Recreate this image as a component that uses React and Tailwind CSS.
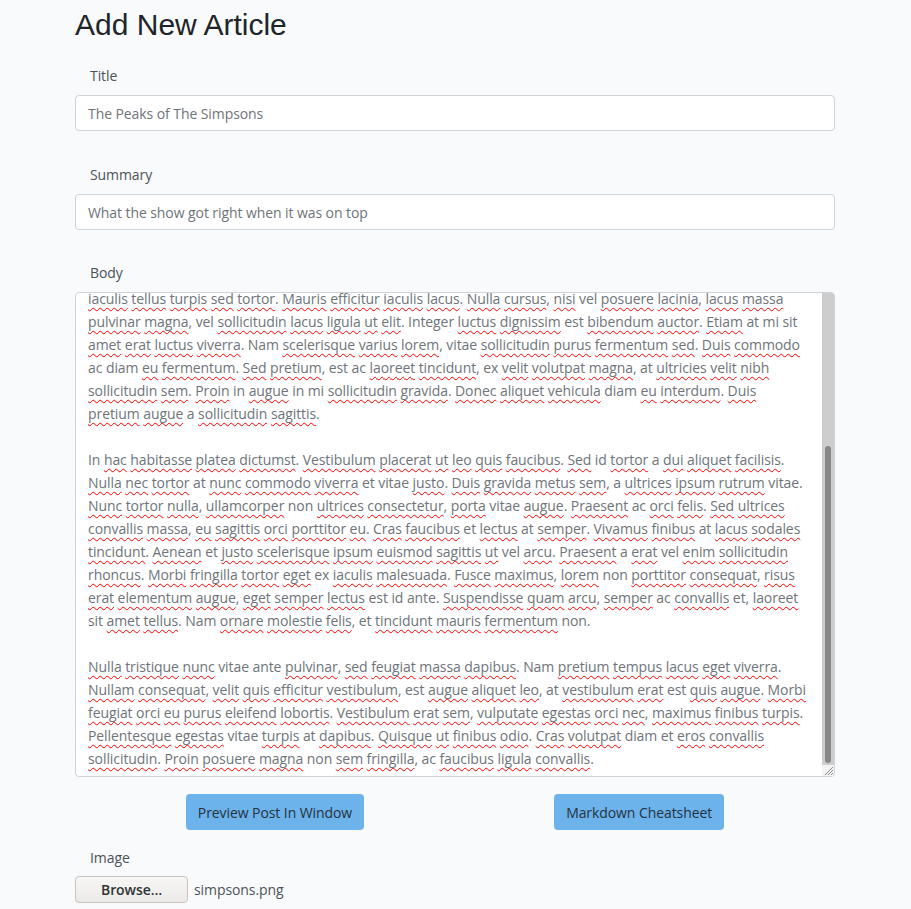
import React from 'react';

const plain = new Set(['vel', 'Integer', 'est', 'at', 'mi', 'sit', 'Nam', 'vitae', 'ac', 'diam', 'ex', 'in', 'In', 'a', 'id', 'et', 'non', 'ante']);

// the textarea is scrolled to the bottom, first line half hidden
const bodyLines = [
  'iaculis tellus turpis sed tortor. Mauris efficitur iaculis lacus. Nulla cursus, nisi vel posuere lacinia, lacus massa',
  'pulvinar magna, vel sollicitudin lacus ligula ut elit. Integer luctus dignissim est bibendum auctor. Etiam at mi sit',
  'amet erat luctus viverra. Nam scelerisque varius lorem, vitae sollicitudin purus fermentum sed. Duis commodo',
  'ac diam eu fermentum. Sed pretium, est ac laoreet tincidunt, ex velit volutpat magna, at ultricies velit nibh',
  'sollicitudin sem. Proin in augue in mi sollicitudin gravida. Donec aliquet vehicula diam eu interdum. Duis',
  'pretium augue a sollicitudin sagittis.',
  '',
  'In hac habitasse platea dictumst. Vestibulum placerat ut leo quis faucibus. Sed id tortor a dui aliquet facilisis.',
  'Nulla nec tortor at nunc commodo viverra et vitae justo. Duis gravida metus sem, a ultrices ipsum rutrum vitae.',
  'Nunc tortor nulla, ullamcorper non ultrices consectetur, porta vitae augue. Praesent ac orci felis. Sed ultrices',
  'convallis massa, eu sagittis orci porttitor eu. Cras faucibus et lectus at semper. Vivamus finibus at lacus sodales',
  'tincidunt. Aenean et justo scelerisque ipsum euismod sagittis ut vel arcu. Praesent a erat vel enim sollicitudin',
  'rhoncus. Morbi fringilla tortor eget ex iaculis malesuada. Fusce maximus, lorem non porttitor consequat, risus',
  'erat elementum augue, eget semper lectus est id ante. Suspendisse quam arcu, semper ac convallis et, laoreet',
  'sit amet tellus. Nam ornare molestie felis, et tincidunt mauris fermentum non.',
  '',
  'Nulla tristique nunc vitae ante pulvinar, sed feugiat massa dapibus. Nam pretium tempus lacus eget viverra.',
  'Nullam consequat, velit quis efficitur vestibulum, est augue aliquet leo, at vestibulum erat est quis augue. Morbi',
  'feugiat orci eu purus eleifend lobortis. Vestibulum erat sem, vulputate egestas orci nec, maximus finibus turpis.',
  'Pellentesque egestas vitae turpis at dapibus. Quisque ut finibus odio. Cras volutpat diam et eros convallis',
  'sollicitudin. Proin posuere magna non sem fringilla, ac faucibus ligula convallis.',
];

// words the spell checker flags get a red squiggle
function CheckedLine({ text }) {
  const parts = text.split(/([A-Za-z]+)/);
  return (
    <div className="h-[23px] shrink-0 whitespace-pre">
      {parts.map((p, i) =>
        i % 2 === 1 && !plain.has(p) ? (
          <span
            key={i}
            className="underline decoration-wavy decoration-[#ff0000] decoration-1 underline-offset-[3px] [text-decoration-skip-ink:none]"
          >
            {p}
          </span>
        ) : (
          <React.Fragment key={i}>{p}</React.Fragment>
        )
      )}
    </div>
  );
}

function Field({ label, value, className }) {
  return (
    <div className={className}>
      <label className="block pl-[15px] leading-[23px] mb-[8px] text-[#4d5257]">{label}</label>
      <div className="h-[36px] flex items-center px-[12px] bg-white border border-[#ced4da] rounded-[4px] text-[#6e747a]">
        {value}
      </div>
    </div>
  );
}

export default function App() {
  return (
    <div className="min-h-screen bg-[#f8fafc] font-['Open_Sans',sans-serif] text-[14px] tracking-[-0.08px]">
      <div className="w-[760px] ml-[75px] pt-[7px] pb-[6px]">
        <h1 className="font-['Liberation_Sans',Arial,sans-serif] text-[30px] leading-[36px] tracking-normal text-[#212529]">
          Add New Article
        </h1>

        <Field className="mt-[21px]" label="Title" value="The Peaks of The Simpsons" />
        <Field className="mt-[32px]" label="Summary" value="What the show got right when it was on top" />

        <div className="mt-[31px]">
          <label className="block pl-[15px] leading-[23px] mb-[8px] text-[#4d5257]">Body</label>
          <div className="h-[485px] flex bg-white border border-[#ced4da] rounded-[4px] overflow-hidden">
            <div className="flex-1 flex flex-col justify-end overflow-hidden px-[12px] pb-[6px] leading-[23px] text-[#6e747a]">
              {bodyLines.map((line, i) => (
                <CheckedLine key={i} text={line} />
              ))}
            </div>
            <div className="w-[12px] flex flex-col">
              <div className="flex-1 bg-[#cdcdcd] flex flex-col justify-end px-[3px] pb-[2px]">
                <div className="h-[317px] rounded-[3px] bg-[#878787]" />
              </div>
              <div className="h-[11px] bg-[#f3f3f3] flex items-end justify-end">
                <svg width="11" height="11" viewBox="0 0 11 11">
                  <path d="M10 2 L2 10 M10 5 L5 10 M10 8 L8 10" stroke="#8e8e8e" strokeWidth="1" />
                </svg>
              </div>
            </div>
          </div>
        </div>

        <div className="mt-[17px] flex justify-center gap-[190px]">
          <button className="h-[36px] px-[12px] rounded-[4px] bg-[#6cb2eb] text-[#26323d]">
            Preview Post In Window
          </button>
          <button className="h-[36px] px-[12px] rounded-[4px] bg-[#6cb2eb] text-[#26323d]">
            Markdown Cheatsheet
          </button>
        </div>

        <div className="mt-[16px]">
          <label className="block pl-[15px] leading-[23px] mb-[7px] text-[#4d5257]">Image</label>
          <div className="flex items-center">
            <button className="w-[113px] h-[27px] rounded-[4px] border border-[#c9c4bf] bg-gradient-to-b from-[#f7f6f5] to-[#eceae8] font-semibold text-[#2e3436]">
              Browse…
            </button>
            <span className="ml-[6px] text-[#4d5257]">simpsons.png</span>
          </div>
        </div>
      </div>
    </div>
  );
}
